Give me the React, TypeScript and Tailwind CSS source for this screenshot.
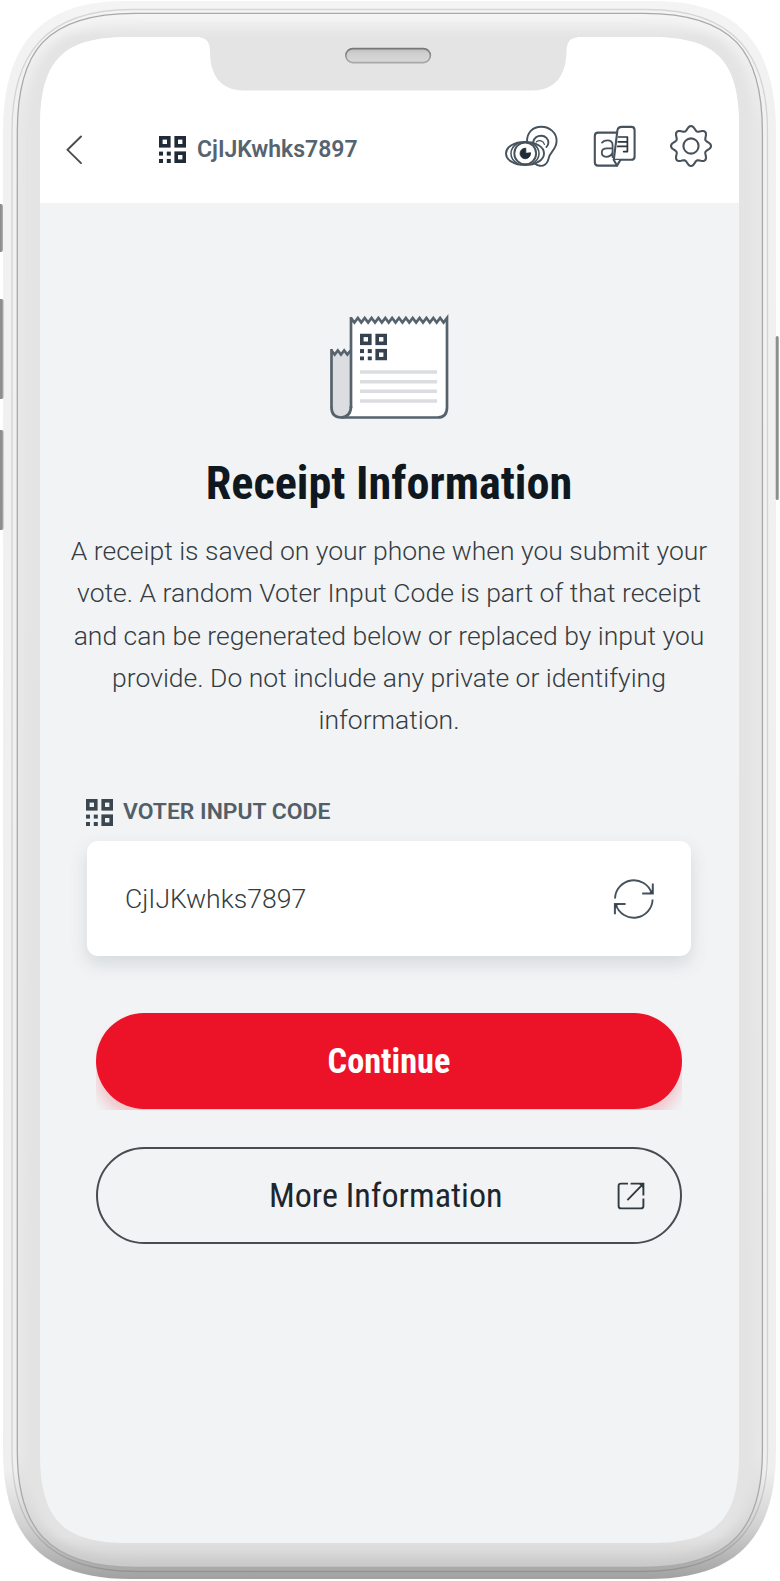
import type { ReactNode } from "react";

const LABEL = "font-['Roboto',sans-serif] font-semibold whitespace-nowrap";

function QrIcon({ color = "#1f2b36" }: { color?: string }) {
  return (
    <svg width="27" height="27" viewBox="0 0 27 27" className="shrink-0">
      <g fill="none" stroke={color} strokeWidth="3.6">
        <rect x="1.8" y="1.8" width="8" height="8" />
        <rect x="17.2" y="1.8" width="8" height="8" />
        <rect x="17.2" y="17.2" width="8" height="8" />
      </g>
      <g fill={color}>
        <rect x="0" y="15.6" width="4" height="4" />
        <rect x="7.8" y="15.6" width="4" height="4" />
        <rect x="0" y="23" width="4" height="4" />
        <rect x="7.8" y="23" width="4" height="4" />
      </g>
    </svg>
  );
}

function ChevronIcon() {
  return (
    <svg width="17" height="30" viewBox="0 0 17 30" fill="none" stroke="#4a4a4c" strokeWidth="1.9" strokeLinecap="round">
      <path d="M15 1.5 1.5 14.8 15 28.2" />
    </svg>
  );
}

function AccessibilityIcon() {
  return (
    <svg width="54" height="44" viewBox="504 123 54 44" fill="none" stroke="#46525c" strokeWidth="1.9" strokeLinecap="round" strokeLinejoin="round">
      <path d="M527 140.5C527 131 533 125.8 541.3 125.8C550 125.8 556.6 132 556.6 139.8C556.6 149 549.8 150.5 548.6 157.5C547.6 162.6 544 165.2 540 164.8C537.8 164.6 536.3 163.8 535.2 162.8" />
      <path d="M533.2 141C534.2 137 537.4 134.8 541.2 134.8C545.6 134.8 548.4 138 548.4 141.6C548.4 143.6 547.6 145 546.4 146" />
      <path d="M536.4 140.8C539.4 138.6 543.4 139.8 544.4 143.4" strokeWidth="1.3" />
      <path d="M506 152.4C506 146 514 141 525 141C536 141 544 146 544 152.4C544 158.8 536 164 525 164C514 164 506 158.8 506 152.4Z" fill="#fff" />
      <path d="M518 142C508.6 147.5 508.6 157.4 518 163M532 142C541.4 147.5 541.4 157.4 532 163" strokeWidth="1.5" />
      <circle cx="525.2" cy="152.4" r="10.9" />
      <path d="M525.8 152V147.2A5.3 5.3 0 1 0 530.6 152Z" fill="#1f2b36" stroke="#1f2b36" strokeWidth="0.8" />
    </svg>
  );
}

function LanguageIcon() {
  return (
    <svg width="44" height="44" viewBox="592 123 44 44" fill="none" stroke="#46525c" strokeWidth="2.1" strokeLinecap="round" strokeLinejoin="round">
      <path d="M617.6 131.6H598.2Q594.8 131.6 594.8 135V161.2Q594.8 164.6 598.2 164.6H617" />
      <path d="M621.8 125.9H631.2Q634.6 125.9 634.6 129.3V155.4Q634.6 158.8 631.2 158.8H613.8L617.4 129.4Q618 125.9 621.8 125.9Z" fill="#fff" />
      <path d="M613.8 159 617 164.6 620.4 159" fill="#fff" />
      <path d="M602 141.6Q604 139.4 607.4 139.4Q612.6 139.4 612.6 144.4V156M612.6 147.4H607Q601.8 147.4 601.8 151.6Q601.8 155.8 606.2 155.8Q611 155.8 612.6 151.4" strokeWidth="1.8" />
      <path d="M618.6 136H627.4V150.6H623.6M618.2 140.8H627.4M617.8 145.4H627.4" stroke="#2b363f" strokeWidth="1.7" />
    </svg>
  );
}

const GEAR =
  Array.from({ length: 128 }, (_, i) => {
    const a = (i / 128) * Math.PI * 2;
    const r = 17.8 + 2.2 * Math.cos(8 * a);
    return `${i ? "L" : "M"}${(22 + r * Math.sin(a)).toFixed(2)} ${(22 - r * Math.cos(a)).toFixed(2)}`;
  }).join("") + "Z";

function GearIcon() {
  return (
    <svg width="44" height="44" viewBox="0 0 44 44" fill="none" stroke="#46525c" strokeWidth="2.1" strokeLinejoin="round">
      <path d={GEAR} />
      <circle cx="22" cy="22" r="7.6" />
    </svg>
  );
}

function zigzag(x0: number, x1: number, top: number, bottom: number, teeth: number) {
  const step = (x1 - x0) / (teeth * 2);
  let d = "";
  for (let i = 0; i <= teeth * 2; i++) d += `L${(x0 + i * step).toFixed(2)} ${i % 2 ? bottom : top}`;
  return d;
}

function ReceiptIcon() {
  return (
    <svg width="124" height="108" viewBox="328 313 124 108" className="mx-auto block">
      <path
        d={`M332.5 408.5V351${zigzag(332.5, 351.5, 350.5, 354, 3)}V408.5C351.5 414 347.5 417.5 342 417.5S332.5 414 332.5 408.5Z`}
        fill="#dcdde1"
      />
      <path d={`M352 318${zigzag(352, 448, 318.5, 322.5, 14)}V408Q448 417.5 438.5 417.5H345Q352 415 352 407Z`} fill="#fff" />
      <g fill="none" stroke="#56636d" strokeWidth="2.7" strokeLinejoin="miter">
        <path d={`M332.5 408V349${zigzag(332.5, 351.5, 350.5, 354.5, 3)}`} />
        <path d={`M352 408V317${zigzag(352, 448, 318, 322.5, 14)}V407.5Q448 417.5 438.5 417.5H342Q332.5 417 332.5 407.5`} />
        <path d="M352 406Q352 417 342 417.5" />
      </g>
      <g stroke="#dcdde1" strokeWidth="3.4">
        <path d="M361 372H438M361 381.7H438M361 391.3H438M361 401H438" />
      </g>
      <svg x="361" y="333.5" width="27" height="27" overflow="visible">
        <QrIcon color="#34434f" />
      </svg>
    </svg>
  );
}

function RefreshIcon() {
  return (
    <svg width="42" height="42" viewBox="0 0 42 42" fill="none" stroke="#46525c" strokeWidth="1.9">
      <path d="M2 20.5A18.8 18.8 0 0 1 38.6 15M39.6 21.5A18.8 18.8 0 0 1 3 27" />
      <path d="M39.8 5.5V15.6H29.2M1.9 36.3V26.1H12.6" strokeWidth="2" />
      <path d="M36.2 15.6H39.8V11Z M5.5 26.1H1.9V30.7Z" fill="#36424d" stroke="none" />
    </svg>
  );
}

function ExternalIcon() {
  return (
    <svg width="28" height="28" viewBox="0 0 28 28" fill="none" stroke="#2f3a41" strokeWidth="1.9">
      <path d="M11 1.6H4Q1.6 1.6 1.6 4V24Q1.6 26.4 4 26.4H24Q26.4 26.4 26.4 24V16.4" />
      <path d="M13.6 1.6H26.4V13.6M26.2 1.8 10.4 18.2" />
      <path d="M21.5 1.2H26.8V7Z" fill="#2f3a41" stroke="none" />
    </svg>
  );
}

const OUTER =
  "M3 132C3 45 40 1 125 1H654C739 1 776 45 776 132V1450C776 1535 739 1579 648 1579H131C40 1579 3 1535 3 1450Z";
const MID =
  "M12 131C12 55 45 9.5 132 9.5H647C734 9.5 767.5 55 767.5 131V1451C767.5 1525 734 1571.5 642 1571.5H137C45 1571.5 12 1525 12 1451Z";
const INNER =
  "M17.3 132C17.3 52 45 13.3 135 13.3H644C734 13.3 762.4 52 762.4 132V1451C762.4 1525 734 1567.5 642 1567.5H137C45 1567.5 17.3 1525 17.3 1451Z";

function PhoneFrame() {
  return (
    <svg width="780" height="1581" viewBox="0 0 780 1581" className="absolute inset-0" fill="none" aria-hidden="true">
      <defs>
        <linearGradient id="rim" x1="0" y1="0" x2="0" y2="1581" gradientUnits="userSpaceOnUse">
          <stop offset="0" stopColor="#f4f4f4" />
          <stop offset="0.06" stopColor="#f1f1f1" />
          <stop offset="0.93" stopColor="#efefef" />
          <stop offset="0.965" stopColor="#d2d2d2" />
          <stop offset="1" stopColor="#9f9f9f" />
        </linearGradient>
        <linearGradient id="bezel" x1="0" y1="0" x2="0" y2="1581" gradientUnits="userSpaceOnUse">
          <stop offset="0.008" stopColor="#f2f2f2" />
          <stop offset="0.024" stopColor="#e4e4e4" />
          <stop offset="0.972" stopColor="#e3e3e3" />
          <stop offset="0.992" stopColor="#cfcfcf" />
        </linearGradient>
        <linearGradient id="shade" x1="0" y1="0" x2="0" y2="1581" gradientUnits="userSpaceOnUse">
          <stop offset="0" stopColor="#f6f6f6" />
          <stop offset="0.08" stopColor="#e8e8e8" />
          <stop offset="0.92" stopColor="#e8e8e8" />
          <stop offset="0.96" stopColor="#d9d9d9" />
          <stop offset="1" stopColor="#c4c4c4" />
        </linearGradient>
        <linearGradient id="key" x1="0" y1="0" x2="1" y2="0">
          <stop offset="0" stopColor="#9b9b9b" />
          <stop offset="0.6" stopColor="#8a8a8a" />
          <stop offset="1" stopColor="#b5b5b5" />
        </linearGradient>
        <clipPath id="innerClip">
          <path d={INNER} />
        </clipPath>
        <filter id="soft" x="-5%" y="-5%" width="110%" height="110%">
          <feGaussianBlur stdDeviation="5" />
        </filter>
      </defs>
      <path d={OUTER} fill="url(#rim)" />
      <path d={MID} stroke="#000" strokeOpacity="0.12" strokeWidth="1.3" />
      <path d={INNER} fill="url(#bezel)" />
      <g clipPath="url(#innerClip)">
        <path d={INNER} stroke="url(#shade)" strokeWidth="16" filter="url(#soft)" />
      </g>
      <path d={INNER} stroke="#a9a9a9" strokeWidth="1.3" />
      <rect x="-2" y="204" width="5" height="48" rx="2" fill="url(#key)" />
      <rect x="-2" y="299" width="5.6" height="100" rx="2" fill="url(#key)" />
      <rect x="-2" y="430" width="5.6" height="100" rx="2" fill="url(#key)" />
      <rect x="775.7" y="336" width="3" height="164" rx="1.5" fill="#8e8e8e" />
    </svg>
  );
}

function Notch() {
  return (
    <svg width="380" height="56" viewBox="200 36 380 56" className="absolute left-[160px] top-[-1px]" fill="none" aria-hidden="true">
      <defs>
        <linearGradient id="speaker" x1="0" y1="0" x2="0" y2="1">
          <stop offset="0" stopColor="#bdbdbd" />
          <stop offset="0.35" stopColor="#cfcfcf" />
          <stop offset="1" stopColor="#d8d8d8" />
        </linearGradient>
        <linearGradient id="speakerEdge" x1="0" y1="0" x2="0" y2="1">
          <stop offset="0" stopColor="#777777" />
          <stop offset="1" stopColor="#a8a8a8" />
        </linearGradient>
      </defs>
      <path d="M200 36V37.4C207 38 210 43 210 51C210 76 221 90.5 244 90.5H532C555 90.5 566 76 566.5 51C567 43 569 38 577 37.4V36Z" fill="#e4e4e4" />
      <rect x="345.8" y="48.6" width="84.6" height="14" rx="7" fill="url(#speaker)" stroke="url(#speakerEdge)" strokeWidth="1.6" />
    </svg>
  );
}

function Header({ code }: { code: string }) {
  return (
    <header className="flex h-[166px] items-start bg-white pt-[87px]">
      <button className="ml-[26px] mt-[11px]" aria-label="Back">
        <ChevronIcon />
      </button>
      <div className="ml-[76px] mt-[11px] flex h-[29px] items-center gap-[11px]">
        <QrIcon />
        <span className={`${LABEL} text-[23px] leading-[28px] text-[#56646f]`}>{code}</span>
      </div>
      <div className="ml-auto mr-[26px] flex">
        <AccessibilityIcon />
        <span className="ml-[34px]">
          <LanguageIcon />
        </span>
        <span className="ml-[33px]">
          <GearIcon />
        </span>
      </div>
    </header>
  );
}

function Line({ children }: { children: ReactNode }) {
  return <span className="block whitespace-nowrap">{children}</span>;
}

export default function App() {
  const code = "CjIJKwhks7897";
  return (
    <div className="relative h-[1581px] w-[780px] overflow-hidden bg-white pl-[40px] pt-[37px]">
      <PhoneFrame />
      <main className="relative h-[1506px] w-[699px] overflow-hidden bg-[#f2f3f5] [clip-path:path('M0,90C0,24_22,0_88,0H611C677,0_699,24_699,90V1416C699,1482_677,1506_611,1506H88C22,1506_0,1482_0,1416Z')]">
        <Header code={code} />
        <Notch />
        <div className="pr-px pt-[110px]">
          <ReceiptIcon />
          <h1 className="mt-[34px] text-center font-['Roboto_Condensed','Roboto',sans-serif] text-[46.2px] font-bold leading-[57px] text-[#0f181e]">
            Receipt Information
          </h1>
          <p className="mt-[18px] text-center font-['Roboto',sans-serif] text-[26.5px] font-light leading-[42.3px] text-[#353c41]">
            <Line>A receipt is saved on your phone when you submit your</Line>
            <Line>vote. A random Voter Input Code is part of that receipt</Line>
            <Line>and can be regenerated below or replaced by input you</Line>
            <Line>provide. Do not include any private or identifying</Line>
            <Line>information.</Line>
          </p>
          <div className="ml-[46px] mt-[57px] flex h-[28px] items-center gap-[10px]">
            <QrIcon color="#3a4750" />
            <span className={`${LABEL} text-[22.9px] leading-[28px] text-[#525f69]`}>VOTER INPUT CODE</span>
          </div>
          <div className="ml-[47px] mt-[15px] flex h-[115px] w-[604px] items-center justify-between rounded-[11px] bg-white pl-[38px] pr-[36px] shadow-[0_8px_18px_rgba(60,85,90,0.16)]">
            <span className="font-['Roboto',sans-serif] text-[26.6px] font-light leading-[40px] text-[#353c41]">{code}</span>
            <button aria-label="Regenerate code">
              <RefreshIcon />
            </button>
          </div>
          <div className="mx-auto mt-[57px] h-[97px] w-[586px] overflow-hidden">
            <button className="h-[96px] w-full rounded-full bg-[#ec1328] text-center font-['Roboto_Condensed','Roboto',sans-serif] text-[34.3px] font-bold text-white shadow-[0_12px_14px_rgba(236,19,40,0.2)]">
              Continue
            </button>
          </div>
          <button className="mx-auto mt-[37px] flex h-[97px] w-[586px] items-center rounded-full border-2 border-[#474c50] font-['Roboto_Condensed','Roboto',sans-serif] text-[34.1px] text-[#1d262c]">
            <span className="ml-[171px]">More Information</span>
            <span className="ml-auto mr-[35px]">
              <ExternalIcon />
            </span>
          </button>
        </div>
      </main>
    </div>
  );
}
